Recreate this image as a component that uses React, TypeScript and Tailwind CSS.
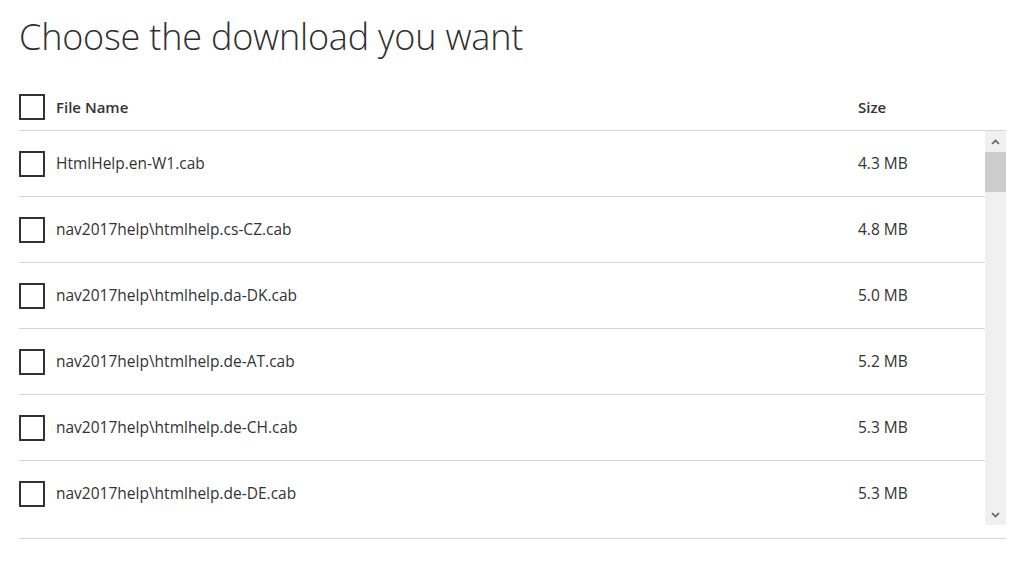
const FILES = [
  { name: "HtmlHelp.en-W1.cab", size: "4.3 MB" },
  { name: "nav2017help\\htmlhelp.cs-CZ.cab", size: "4.8 MB" },
  { name: "nav2017help\\htmlhelp.da-DK.cab", size: "5.0 MB" },
  { name: "nav2017help\\htmlhelp.de-AT.cab", size: "5.2 MB" },
  { name: "nav2017help\\htmlhelp.de-CH.cab", size: "5.3 MB" },
  { name: "nav2017help\\htmlhelp.de-DE.cab", size: "5.3 MB" },
];

function Box() {
  return <span className="block w-[26px] h-[26px] border-2 border-[#333] shrink-0" />;
}

export default function App() {
  return (
    <main className="bg-white w-[1024px] h-[570px] overflow-hidden text-[#333] font-['Open_Sans','Noto_Sans',sans-serif]">
      <div className="pl-[19px] pt-[12px] w-[1006px]">
        <h1 className="text-[36px] font-light leading-[50px] text-[#2f2f2f] tracking-[-0.2px]">
          Choose the download you want
        </h1>

        {/* header */}
        <div className="mt-[33px] h-[36px] flex items-center border-b border-[#d5d5d5] pb-[1px]">
          <div className="flex items-center gap-[11px] w-[839px] -mt-[10px]">
            <Box />
            <span className="text-[15px] font-semibold">File Name</span>
          </div>
          <span className="text-[15px] font-semibold -mt-[10px]">Size</span>
        </div>

        {/* list */}
        <div className="flex h-[394px]">
          <div className="flex-1 overflow-hidden">
            {FILES.map((f) => (
              <div key={f.name} className="h-[66px] flex items-center border-b border-[#d5d5d5]">
                <div className="flex items-center gap-[11px] w-[839px]">
                  <Box />
                  <span className="text-[15.5px]">{f.name}</span>
                </div>
                <span className="text-[15.5px]">{f.size}</span>
              </div>
            ))}
          </div>
          <div className="w-[21px] bg-[#f0f0f0] flex flex-col">
            <div className="h-[21px] flex items-center justify-center">
              <svg width="9" height="6" viewBox="0 0 9 6">
                <path d="M1 5 L4.5 1.5 L8 5" fill="none" stroke="#5f5f5f" strokeWidth="1.6" />
              </svg>
            </div>
            <div className="h-[40px] bg-[#cdcdcd]" />
            <div className="flex-1" />
            <div className="h-[21px] flex items-center justify-center">
              <svg width="9" height="6" viewBox="0 0 9 6">
                <path d="M1 1 L4.5 4.5 L8 1" fill="none" stroke="#5f5f5f" strokeWidth="1.6" />
              </svg>
            </div>
          </div>
        </div>

        <div className="mt-[13px] border-b border-[#d5d5d5]" />
      </div>
    </main>
  );
}
